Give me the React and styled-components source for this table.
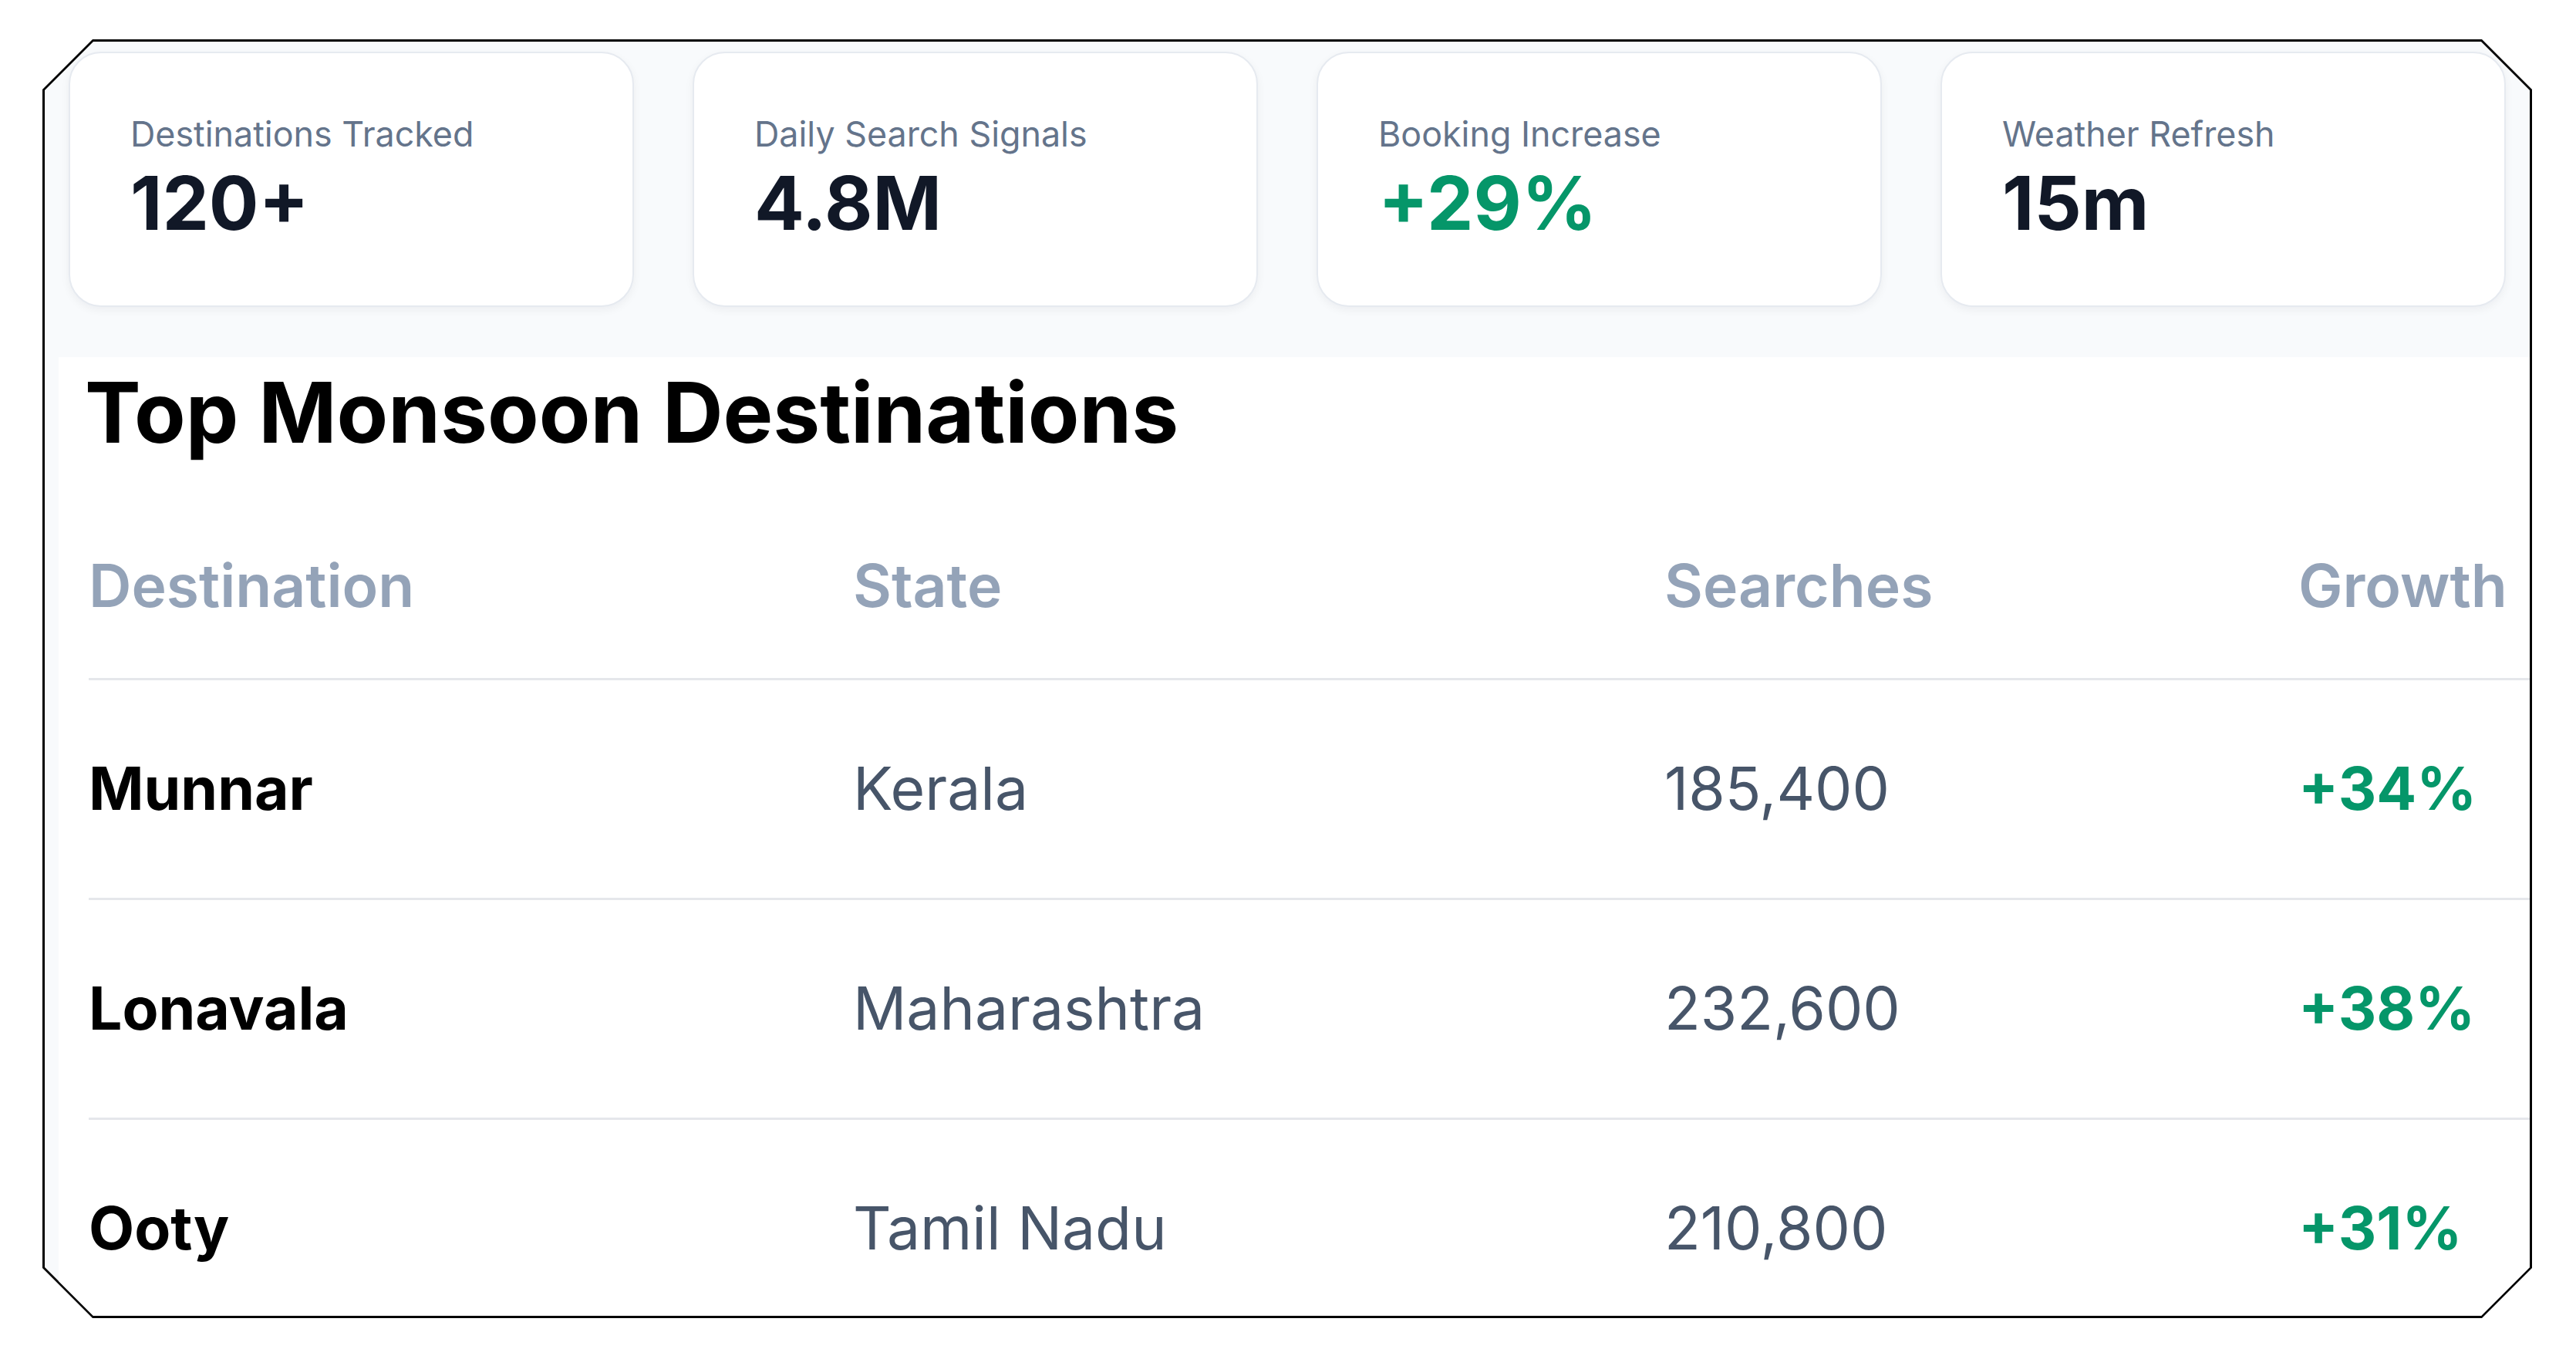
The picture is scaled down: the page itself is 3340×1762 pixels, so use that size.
import React from "react";
import styled, { createGlobalStyle } from "styled-components";

const stats = [
  { label: "Destinations Tracked", value: "120+" },
  { label: "Daily Search Signals", value: "4.8M" },
  { label: "Booking Increase", value: "+29%", positive: true },
  { label: "Weather Refresh", value: "15m" },
];

const destinations = [
  { name: "Munnar", state: "Kerala", searches: "185,400", growth: "+34%" },
  { name: "Lonavala", state: "Maharashtra", searches: "232,600", growth: "+38%" },
  { name: "Ooty", state: "Tamil Nadu", searches: "210,800", growth: "+31%" },
];

const App = () => {
  return (
    <>
      <GlobalStyle />
      <Page>
        <Frame>
          <Inner>
            <StatsGrid>
              {stats.map((s) => (
                <StatCard key={s.label}>
                  <StatLabel>{s.label}</StatLabel>
                  <StatValue $positive={s.positive}>{s.value}</StatValue>
                </StatCard>
              ))}
            </StatsGrid>

            <Section>
              <Title>Top Monsoon Destinations</Title>
              <Table>
                <HeadCell>Destination</HeadCell>
                <HeadCell>State</HeadCell>
                <HeadCell>Searches</HeadCell>
                <HeadCell>Growth</HeadCell>
                {destinations.map((d) => (
                  <React.Fragment key={d.name}>
                    <NameCell>{d.name}</NameCell>
                    <Cell>{d.state}</Cell>
                    <Cell>{d.searches}</Cell>
                    <GrowthCell>{d.growth}</GrowthCell>
                  </React.Fragment>
                ))}
              </Table>
            </Section>
          </Inner>
        </Frame>
      </Page>
    </>
  );
};

export default App;

const GlobalStyle = createGlobalStyle`
  * {
    box-sizing: border-box;
  }
  body {
    margin: 0;
    background: #ffffff;
    font-family: Inter, "Noto Sans", sans-serif;
  }
`;

const Page = styled.div`
  width: 3340px;
  height: 1762px;
  padding: 51px 0 0 55px;
  overflow: hidden;
`;

const chamfer = (c) => `polygon(
  ${c}px 0, calc(100% - ${c}px) 0, 100% ${c}px, 100% calc(100% - ${c}px),
  calc(100% - ${c}px) 100%, ${c}px 100%, 0 calc(100% - ${c}px), 0 ${c}px
)`;

const Frame = styled.div`
  width: 3228px;
  height: 1658px;
  padding: 3px;
  background: #000;
  clip-path: ${chamfer(65)};
`;

const Inner = styled.div`
  height: 100%;
  background: #f8fafc;
  clip-path: ${chamfer(63)};
  overflow: hidden;
  display: flex;
  flex-direction: column;
`;

const StatsGrid = styled.div`
  display: grid;
  grid-template-columns: repeat(4, 733px);
  gap: 76px;
  padding: 13px 0 0 31px;
`;

const StatCard = styled.div`
  height: 331px;
  padding: 72px 78px 0;
  background: #ffffff;
  border: 2px solid #e6eaf0;
  border-radius: 42px;
  box-shadow: 0 4px 12px rgba(15, 23, 42, 0.05);
`;

const StatLabel = styled.div`
  font-size: 44.8px;
  line-height: 67.2px;
  color: #64748b;
`;

const StatValue = styled.div`
  font-size: 96px;
  line-height: 110.4px;
  font-weight: 700;
  color: ${(p) => (p.$positive ? "#059669" : "#111827")};
`;

const Section = styled.div`
  flex: 1;
  margin: 65px 0 0 18px;
  padding: 7px 0 0 34px;
  background: #ffffff;
`;

const Title = styled.h2`
  margin: 0 0 39px;
  font-size: 108.8px;
  line-height: 130.56px;
  font-weight: 700;
  color: #000;
`;

const Table = styled.div`
  display: grid;
  grid-template-columns: 991px 1052px 822px 1fr;
  margin-left: 5px;
`;

const HeadCell = styled.div`
  padding: 73px 0;
  font-size: 76.8px;
  line-height: 93px;
  font-weight: 600;
  color: #94a3b8;
  border-bottom: 3.2px solid #e5e7eb;
`;

const Cell = styled.div`
  padding: 94.5px 0;
  font-size: 76.8px;
  line-height: 93px;
  color: #475569;
  border-bottom: 3.2px solid #e5e7eb;
`;

const NameCell = styled(Cell)`
  font-weight: 700;
  color: #000;
`;

const GrowthCell = styled(Cell)`
  font-weight: 700;
  color: #059669;
`;
